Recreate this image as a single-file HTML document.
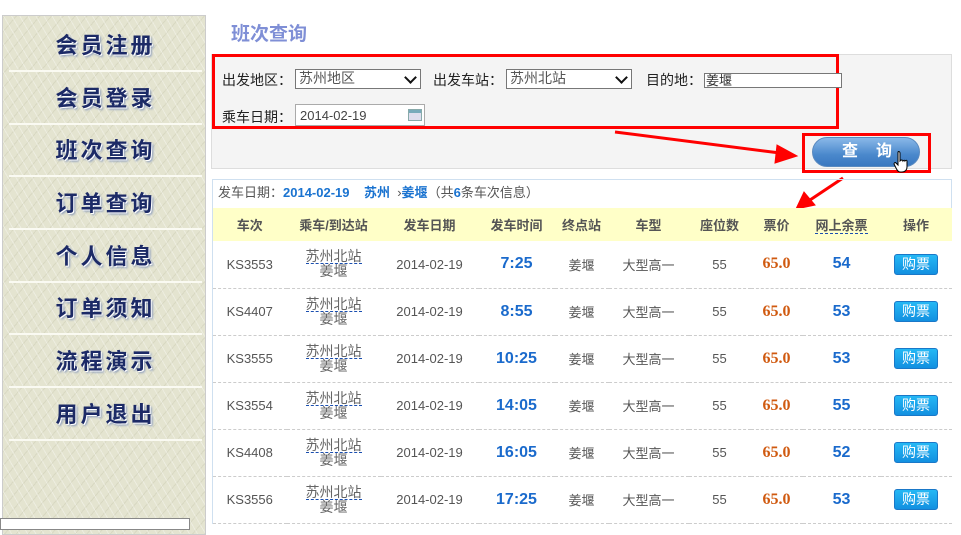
<!DOCTYPE html>
<html><head><meta charset="utf-8">
<style>
*{margin:0;padding:0;box-sizing:border-box}
body{width:961px;height:527px;overflow:hidden;background:#fff;font-family:"Liberation Sans","Noto Sans CJK SC",sans-serif;position:relative;font-size:13px;color:#444}
.a{position:absolute}
#side{left:2px;top:15px;width:204px;height:520px;border:1px solid #ccc;background:#e4e4d0;
background-image:repeating-linear-gradient(60deg,rgba(255,255,255,.35) 0 1px,transparent 1px 7px),repeating-linear-gradient(-50deg,rgba(160,160,130,.18) 0 1px,transparent 1px 9px)}
.mi{position:absolute;left:6px;width:193px;height:53px;text-align:center;font-size:22px;font-weight:bold;letter-spacing:3px;color:#1c2a66;text-shadow:1px 1px 0 #fff,2px 2px 2px #8899bb;line-height:53px;border-bottom:2px solid #fafaf2}
h1{position:absolute;left:231px;top:19px;font-size:19px;color:#7f8fd6;font-weight:bold}
#panel{left:211px;top:54px;width:741px;height:115px;background:#f4f4f4;border:1px solid #ddd}
.red{position:absolute;border:3px solid #f00}
.lbl{position:absolute;font-size:14px;color:#222}
.sel{position:absolute;border:1px solid #777;background:#fff;font-size:14px;color:#555;padding-left:3px;line-height:17px}
.sel:after{content:"";position:absolute;right:5px;top:3px;width:7px;height:7px;border-right:2px solid #111;border-bottom:2px solid #111;transform:rotate(45deg)}
#info{left:212px;top:179px;width:740px;height:29px;border:1px solid #cfe0f0;border-bottom:none;font-size:13px;line-height:26px;padding-left:5px;color:#555}
#info b{color:#1a73d0}
table{position:absolute;left:212px;top:208px;width:739px;border-collapse:collapse;border-left:1px solid #cfe0f0;table-layout:fixed}
th{background:#ffffc8;height:33px;font-size:13px;color:#555;font-weight:bold}
td{height:47px;text-align:center;border-bottom:1px dashed #ccc;font-size:13px;color:#555}
.st{line-height:15px;font-size:14px;color:#666}
.st span{border-bottom:1px dashed #1a4fb0;display:inline-block;line-height:14px}
.tm{font-weight:bold;color:#1a6acc;font-size:16px}
.pr{font-weight:bold;color:#d05a10;font-size:16px;font-family:"Liberation Serif",serif}
.rm{font-weight:bold;color:#1a6acc;font-size:16px}
.buy{display:inline-block;width:44px;height:21px;border:1px solid #1a78c8;border-radius:3px;background:linear-gradient(#25b8f5,#1390e0);color:#fff;font-size:14px;line-height:19px}
</style></head><body>
<div id="side" class="a">
<div class="mi" style="top:3px">会员注册</div>
<div class="mi" style="top:56px">会员登录</div>
<div class="mi" style="top:108px">班次查询</div>
<div class="mi" style="top:161px">订单查询</div>
<div class="mi" style="top:214px">个人信息</div>
<div class="mi" style="top:266px">订单须知</div>
<div class="mi" style="top:319px">流程演示</div>
<div class="mi" style="top:372px">用户退出</div>
</div>
<div class="a" style="left:0;top:518px;width:190px;height:12px;border:1px solid #888;background:#fff"></div>
<h1>班次查询</h1>
<div id="panel" class="a"></div>
<div class="red" style="left:212px;top:54px;width:627px;height:75px"></div>
<div class="lbl" style="left:222px;top:70px">出发地区：</div>
<div class="sel" style="left:295px;top:69px;width:126px;height:20px">苏州地区</div>
<div class="lbl" style="left:433px;top:70px">出发车站：</div>
<div class="sel" style="left:506px;top:69px;width:126px;height:20px">苏州北站</div>
<div class="lbl" style="left:646px;top:70px">目的地：</div>
<div class="a" style="left:704px;top:73px;width:138px;height:15px;border:1px solid #777;background:#fff;font-size:13px;line-height:13px;color:#333;padding-left:1px">姜堰</div>
<div class="lbl" style="left:222px;top:107px">乘车日期：</div>
<div class="a" style="left:295px;top:104px;width:130px;height:22px;border:1px solid #aaa;background:#fff;font-size:13px;color:#444;line-height:22px;padding-left:4px">2014-02-19
<div class="a" style="left:112px;top:4px;width:14px;height:12px;border:1px solid #8aa;background:linear-gradient(#7ab 0 3px,#dde 3px)"></div></div>
<div class="red" style="left:802px;top:133px;width:129px;height:40px"></div>
<div class="a" style="left:812px;top:137px;width:108px;height:30px;border-radius:15px;background:linear-gradient(#8ab8e8,#4a88cc 60%,#3a78c0);border:1px solid #5a8ac0;color:#fff;font-weight:bold;font-size:16px;line-height:28px;padding-left:29px;letter-spacing:18px">查询</div>
<svg class="a" style="left:893px;top:150px" width="20" height="24" viewBox="0 0 20 24"><path d="M5 2c1-1 2 0 2 1v8l1-1c1 0 2 0 2 1 1-1 2-1 2 0 1-1 2-1 2 0v6c0 3-2 5-5 5H7c-2 0-3-2-4-4l-2-4c0-1 1-2 2-1l2 2V3z" fill="#fff" stroke="#000" stroke-width="1"/></svg>
<svg class="a" style="left:0;top:0" width="961" height="527"><g stroke="#f00" stroke-width="3" fill="#f00"><line x1="615" y1="132" x2="780" y2="153"/><polygon points="797,156 777,145 775,163" stroke-width="1"/><line x1="843" y1="178" x2="810" y2="200"/><polygon points="796,209 804,192 815,205" stroke-width="1"/></g></svg>
<div id="info" class="a">发车日期：<b>2014-02-19</b>&nbsp;&nbsp;&nbsp; <b>苏州</b> &nbsp;›<b>姜堰</b>（共<b>6</b>条车次信息）</div>
<table>
<colgroup><col style="width:74px"><col style="width:94px"><col style="width:98px"><col style="width:76px"><col style="width:54px"><col style="width:80px"><col style="width:62px"><col style="width:52px"><col style="width:78px"><col style="width:71px"></colgroup>
<tr><th>车次</th><th>乘车/到达站</th><th>发车日期</th><th>发车时间</th><th>终点站</th><th>车型</th><th>座位数</th><th>票价</th><th><span style="border-bottom:1px dashed #1a4fb0">网上余票</span></th><th>操作</th></tr>
<tr><td>KS3553</td><td class="st"><span>苏州北站</span><br>姜堰</td><td>2014-02-19</td><td class="tm">7:25</td><td>姜堰</td><td>大型高一</td><td>55</td><td class="pr">65.0</td><td class="rm">54</td><td><span class="buy">购票</span></td></tr>
<tr><td>KS4407</td><td class="st"><span>苏州北站</span><br>姜堰</td><td>2014-02-19</td><td class="tm">8:55</td><td>姜堰</td><td>大型高一</td><td>55</td><td class="pr">65.0</td><td class="rm">53</td><td><span class="buy">购票</span></td></tr>
<tr><td>KS3555</td><td class="st"><span>苏州北站</span><br>姜堰</td><td>2014-02-19</td><td class="tm">10:25</td><td>姜堰</td><td>大型高一</td><td>55</td><td class="pr">65.0</td><td class="rm">53</td><td><span class="buy">购票</span></td></tr>
<tr><td>KS3554</td><td class="st"><span>苏州北站</span><br>姜堰</td><td>2014-02-19</td><td class="tm">14:05</td><td>姜堰</td><td>大型高一</td><td>55</td><td class="pr">65.0</td><td class="rm">55</td><td><span class="buy">购票</span></td></tr>
<tr><td>KS4408</td><td class="st"><span>苏州北站</span><br>姜堰</td><td>2014-02-19</td><td class="tm">16:05</td><td>姜堰</td><td>大型高一</td><td>55</td><td class="pr">65.0</td><td class="rm">52</td><td><span class="buy">购票</span></td></tr>
<tr><td>KS3556</td><td class="st"><span>苏州北站</span><br>姜堰</td><td>2014-02-19</td><td class="tm">17:25</td><td>姜堰</td><td>大型高一</td><td>55</td><td class="pr">65.0</td><td class="rm">53</td><td><span class="buy">购票</span></td></tr>
</table>
</body></html>
